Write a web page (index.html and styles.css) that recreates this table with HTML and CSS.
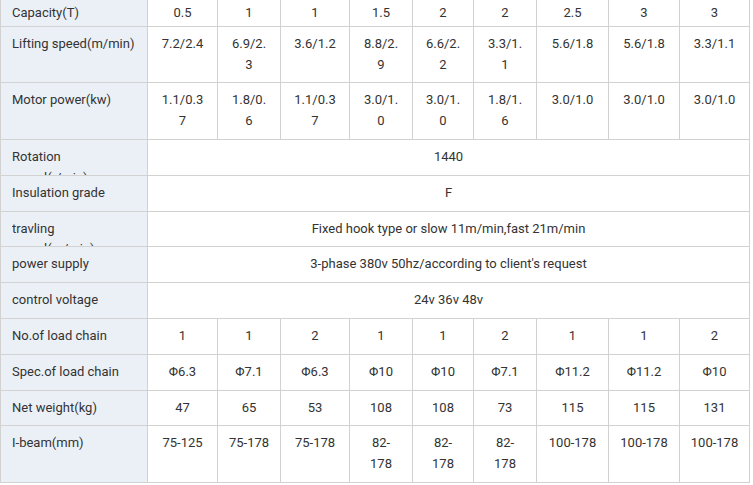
FILE: index.html
```html
<!DOCTYPE html>
<html lang="en">
<head>
<meta charset="utf-8">
<title>Specifications</title>
<link rel="stylesheet" href="styles.css">
</head>
<body>
<table class="spec">
  <colgroup>
    <col class="c-label"><col class="w70"><col class="w63"><col class="w69"><col class="w63"><col class="w61"><col class="w63"><col class="w72"><col class="w71"><col class="w70">
  </colgroup>
  <tbody>
    <tr class="first">
      <th><div class="lbl">Capacity(T)</div></th>
      <td>0.5</td><td>1</td><td>1</td><td>1.5</td><td>2</td><td>2</td><td>2.5</td><td>3</td><td>3</td>
    </tr>
    <tr>
      <th><div class="lbl">Lifting speed(m/min)</div></th>
      <td>7.2/2.4</td><td>6.9/2.<br>3</td><td>3.6/1.2</td><td>8.8/2.<br>9</td><td>6.6/2.<br>2</td><td>3.3/1.<br>1</td><td>5.6/1.8</td><td>5.6/1.8</td><td>3.3/1.1</td>
    </tr>
    <tr>
      <th><div class="lbl">Motor power(kw)</div></th>
      <td>1.1/0.3<br>7</td><td>1.8/0.<br>6</td><td>1.1/0.3<br>7</td><td>3.0/1.<br>0</td><td>3.0/1.<br>0</td><td>1.8/1.<br>6</td><td>3.0/1.0</td><td>3.0/1.0</td><td>3.0/1.0</td>
    </tr>
    <tr>
      <th><div class="lbl">Rotation speed(r/min)</div></th>
      <td colspan="9">1440</td>
    </tr>
    <tr>
      <th><div class="lbl">Insulation grade</div></th>
      <td colspan="9">F</td>
    </tr>
    <tr>
      <th><div class="lbl">travling speed(m/min)</div></th>
      <td colspan="9">Fixed hook type or slow 11m/min,fast 21m/min</td>
    </tr>
    <tr>
      <th><div class="lbl">power supply</div></th>
      <td colspan="9">3-phase 380v 50hz/according to client's request</td>
    </tr>
    <tr>
      <th><div class="lbl">control voltage</div></th>
      <td colspan="9">24v 36v 48v</td>
    </tr>
    <tr>
      <th><div class="lbl">No.of load chain</div></th>
      <td>1</td><td>1</td><td>2</td><td>1</td><td>1</td><td>2</td><td>1</td><td>1</td><td>2</td>
    </tr>
    <tr>
      <th><div class="lbl">Spec.of load chain</div></th>
      <td>Φ6.3</td><td>Φ7.1</td><td>Φ6.3</td><td>Φ10</td><td>Φ10</td><td>Φ7.1</td><td>Φ11.2</td><td>Φ11.2</td><td>Φ10</td>
    </tr>
    <tr>
      <th><div class="lbl">Net weight(kg)</div></th>
      <td>47</td><td>65</td><td>53</td><td>108</td><td>108</td><td>73</td><td>115</td><td>115</td><td>131</td>
    </tr>
    <tr>
      <th><div class="lbl">I-beam(mm)</div></th>
      <td>75-125</td><td>75-178</td><td>75-178</td><td>82-<br>178</td><td>82-<br>178</td><td>82-<br>178</td><td>100-178</td><td>100-178</td><td>100-178</td>
    </tr>
  </tbody>
</table>
</body>
</html>
```

FILE: styles.css
```css
html, body {
  margin: 0;
  padding: 0;
  background: #ffffff;
}

body {
  font-family: Roboto, "Liberation Sans", Arial, sans-serif;
  font-size: 13px;
  line-height: 20.8px;
  color: #333333;
}

.spec {
  border-collapse: collapse;
  table-layout: fixed;
  width: 750px;
  margin-top: -1px;
}

.c-label { width: 147px; }
.w61 { width: 61px; }
.w63 { width: 63px; }
.w69 { width: 69px; }
.w70 { width: 70px; }
.w71 { width: 71px; }
.w72 { width: 72px; }

.spec th,
.spec td {
  border: 1px solid #d2d2d2;
  padding: 7px 4px;
  vertical-align: top;
  text-align: center;
  white-space: nowrap;
  font-weight: 400;
}

.spec th {
  background: #ebf0f7;
  text-align: left;
  padding: 7px 10px 0 11px;
}

.lbl {
  height: 27.6px;
  overflow: hidden;
  white-space: normal;
}

.spec tr.first th,
.spec tr.first td {
  padding-top: 3px;
  padding-bottom: 2px;
}

.spec tr.first .lbl {
  height: 20.8px;
}
```
